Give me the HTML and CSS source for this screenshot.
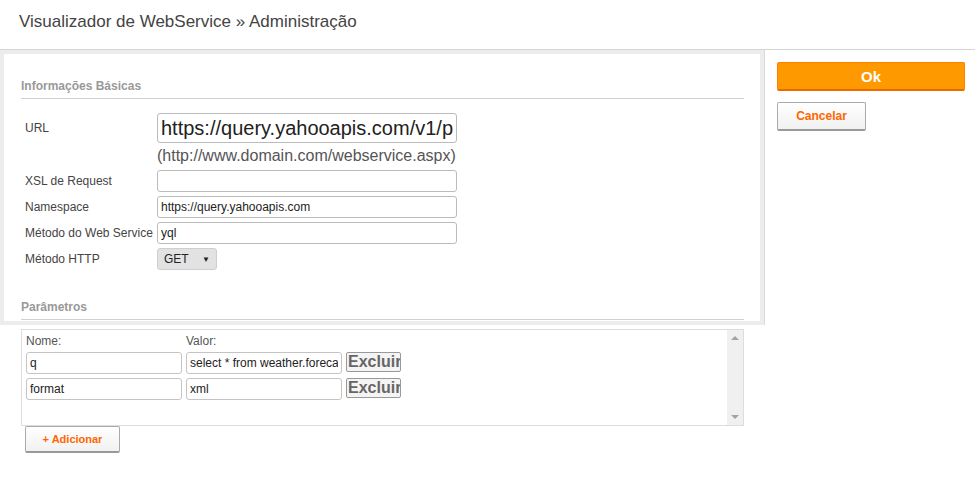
FILE: index.html
```html
<!DOCTYPE html>
<html lang="pt-br">
<head>
    <meta charset="UTF-8">
    <title>Visualizador de WebService</title>
    <link rel="stylesheet" href="styles.css">
</head>
<body>
<header class="topo">
    <h1>Visualizador de WebService &raquo; Administração</h1>
</header>
<section class="site">
    <div class="coluna">
        <div class="conteudo">
            <div class="painel">
                <h3 class="secao">Informações Básicas</h3>
                <div class="form">
                    <label>URL</label>
                    <input type="text" class="url" value="https://query.yahooapis.com/v1/public/yql">
                    <span></span>
                    <p class="dica">(http://www.domain.com/webservice.aspx)</p>
                    <label>XSL de Request</label>
                    <input type="text" value="">
                    <label>Namespace</label>
                    <input type="text" value="https://query.yahooapis.com">
                    <label>Método do Web Service</label>
                    <input type="text" value="yql">
                    <label>Método HTTP</label>
                    <div class="combo">
                        <span>GET</span>
                        <span class="seta">&#9660;</span>
                    </div>
                </div>
                <h3 class="secao secao2">Parâmetros</h3>
            </div>
        </div>
        <div class="params">
            <div class="lista">
                <div class="linha cab">
                    <span class="col">Nome:</span>
                    <span class="col">Valor:</span>
                </div>
                <div class="linha">
                    <input type="text" class="col" value="q">
                    <input type="text" class="col" value="select * from weather.forecast">
                    <button class="excluir">Excluir</button>
                </div>
                <div class="linha">
                    <input type="text" class="col" value="format">
                    <input type="text" class="col" value="xml">
                    <button class="excluir">Excluir</button>
                </div>
            </div>
            <div class="rolagem">
                <span class="up"></span>
                <span class="down"></span>
            </div>
        </div>
        <button class="botao adicionar">+ Adicionar</button>
    </div>
    <aside class="lateral">
        <button class="ok">Ok</button>
        <button class="botao cancelar">Cancelar</button>
    </aside>
</section>
</body>
</html>
```

FILE: styles.css
```css
*{
    margin: 0;
    padding: 0;
    box-sizing: border-box;
}
body{
    font-family: "Liberation Sans", Arial, Helvetica, sans-serif;
    color: #444;
    background: #fff;
}
.topo{
    height: 50px;
    border-bottom: 1px solid #d4d4d4;
    padding: 11px 0 0 19px;
}
.topo h1{
    font-size: 17px;
    font-weight: normal;
    color: #444;
    line-height: 22px;
}
.site{
    display: flex;
    align-items: flex-start;
}
.coluna{
    width: 765px;
}
.conteudo{
    height: 275px;
    background: #ececec;
    padding: 4px;
    border-right: 1px solid #dadada;
}
.painel{
    background: #fff;
    height: 267px;
    padding: 24px 16px 0 17px;
}
.secao{
    font-size: 12px;
    font-weight: bold;
    color: #999;
    line-height: 16px;
    padding-bottom: 4px;
    border-bottom: 1px solid #d0d0d0;
}
.secao2{
    margin-top: 29px;
}
.form{
    display: grid;
    grid-template-columns: 136px 300px;
    row-gap: 4px;
    margin-top: 14px;
    align-items: center;
}
.form label{
    font-size: 12px;
    padding-left: 4px;
    color: #444;
}
.form input{
    height: 22px;
    border: 1px solid #bbb;
    border-radius: 3px;
    font-family: inherit;
    font-size: 12px;
    padding: 0 3px;
    color: #222;
}
.form input.url{
    height: 30px;
    font-size: 20px;
    padding: 0 3px;
}
.form label:first-child{
    align-self: start;
    padding-top: 8px;
}
.dica{
    font-size: 16px;
    color: #555;
    line-height: 22px;
    margin-top: -2px;
    margin-bottom: -1px;
}
.combo{
    width: 60px;
    height: 22px;
    background: #e2e2e2;
    border: 1px solid #cfcfcf;
    border-radius: 3px;
    display: flex;
    justify-content: space-between;
    align-items: center;
    padding: 0 6px;
    font-size: 12px;
    color: #222;
}
.seta{
    font-size: 8px;
}
.params{
    display: flex;
    margin: 4px 0 0 21px;
    width: 723px;
    height: 97px;
    border: 1px solid #ddd;
    background: #fff;
}
.lista{
    flex: 1;
    padding: 3px 4px;
}
.linha{
    display: flex;
    gap: 4px;
    margin-bottom: 4px;
}
.cab{
    font-size: 12px;
    line-height: 16px;
    margin-bottom: 3px;
    color: #555;
}
.cab .col{
    width: 156px;
}
.linha input.col{
    width: 156px;
    height: 22px;
    border: 1px solid #c4c4c4;
    border-radius: 3px;
    font-family: inherit;
    font-size: 12px;
    padding: 0 3px;
    color: #222;
}
.excluir{
    width: 55px;
    height: 20px;
    font-family: inherit;
    font-size: 16px;
    font-weight: bold;
    color: #666;
    background: #f4f4f4;
    border: 1px solid #999;
    border-radius: 2px;
    padding: 0 1px;
    overflow: hidden;
    white-space: nowrap;
    text-align: left;
    line-height: 18px;
}
.rolagem{
    width: 16px;
    background: #f0f0f0;
    display: flex;
    flex-direction: column;
    justify-content: space-between;
    align-items: center;
    padding: 6px 0;
}
.up{
    width: 0;
    height: 0;
    border-left: 4px solid transparent;
    border-right: 4px solid transparent;
    border-bottom: 4px solid #a3a3a3;
}
.down{
    width: 0;
    height: 0;
    border-left: 4px solid transparent;
    border-right: 4px solid transparent;
    border-top: 4px solid #a3a3a3;
}
.botao{
    font-family: inherit;
    font-weight: bold;
    color: #f60;
    background: linear-gradient(180deg, #fff 0%, #f1f1f1 100%);
    border: 1px solid #aaa;
    border-bottom: 2px solid #999;
    border-radius: 2px;
    cursor: pointer;
}
.adicionar{
    display: block;
    width: 95px;
    height: 27px;
    margin: 0 0 0 25px;
    font-size: 11px;
}
.lateral{
    flex: 1;
    padding: 12px 10px 0 12px;
    display: flex;
    flex-direction: column;
    align-items: flex-start;
    gap: 11px;
}
.ok{
    width: 100%;
    height: 29px;
    background: #ff9900;
    border: 1px solid #ff8000;
    border-bottom: 2px solid #f06800;
    border-radius: 2px;
    color: #fff;
    font-family: inherit;
    font-weight: bold;
    font-size: 15px;
    cursor: pointer;
}
.cancelar{
    width: 89px;
    height: 29px;
    font-size: 12px;
}
```
